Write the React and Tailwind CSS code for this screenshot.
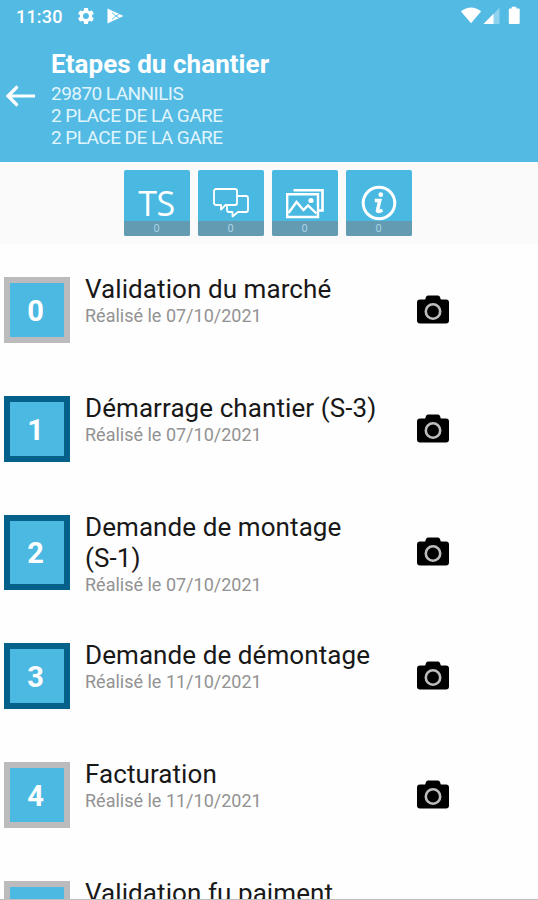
// App.jsx
import React from 'react';

const steps = [
  { title: 'Validation du marché', date: '07/10/2021', active: false },
  { title: 'Démarrage chantier', code: '(S-3)', date: '07/10/2021', active: true },
  { title: 'Demande de montage', code: '(S-1)', date: '07/10/2021', active: true },
  { title: 'Demande de démontage', date: '11/10/2021', active: true },
  { title: 'Facturation', date: '11/10/2021', active: false },
  { title: 'Validation fu paiment', date: '11/10/2021', active: false },
];

const GearIcon = () => (
  <svg className="w-[20px] h-[20px]" viewBox="0 0 24 24" fill="currentColor">
    <path d="M19.14 12.94c.04-.3.06-.61.06-.94 0-.32-.02-.64-.07-.94l2.03-1.58a.49.49 0 0 0 .12-.61l-1.92-3.32a.488.488 0 0 0-.59-.22l-2.39.96c-.5-.38-1.03-.7-1.62-.94l-.36-2.54a.484.484 0 0 0-.48-.41h-3.84c-.24 0-.43.17-.47.41l-.36 2.54c-.59.24-1.13.57-1.62.94l-2.39-.96c-.22-.08-.47 0-.59.22L2.74 8.87c-.12.21-.08.47.12.61l2.03 1.58c-.05.3-.09.63-.09.94s.02.64.07.94l-2.03 1.58a.49.49 0 0 0-.12.61l1.92 3.32c.12.22.37.29.59.22l2.39-.96c.5.38 1.03.7 1.62.94l.36 2.54c.05.24.24.41.48.41h3.84c.24 0 .44-.17.47-.41l.36-2.54c.59-.24 1.13-.56 1.62-.94l2.39.96c.22.08.47 0 .59-.22l1.92-3.32c.12-.22.07-.47-.12-.61l-2.01-1.58zM12 15.6A3.61 3.61 0 0 1 8.4 12c0-1.98 1.62-3.6 3.6-3.6s3.6 1.62 3.6 3.6-1.62 3.6-3.6 3.6z" />
  </svg>
);

const PlayIcon = () => (
  <svg className="w-[17px] h-[16px]" viewBox="0 0 17 16" fill="currentColor">
    <path d="M0.5 0.5 L16.5 8 L0.5 15.5 Z" />
    <path d="M5 4.5 L9 8 L5 11.5 M9 8 L12 6.3 M9 8 L12 9.7" fill="none" stroke="#53bae3" strokeWidth="0.9" />
  </svg>
);

const StatusIcons = () => (
  <svg className="w-[62px] h-[20px]" viewBox="0 0 62 20" fill="currentColor">
    <path d="M0.8 5.2 Q11 -2.4 21.2 5.2 L11 17.2 Z" />
    <path d="M39.5 1.8 V18 H23.5 Z" opacity="0.35" />
    <path d="M33.5 7.8 V18 H23.5 Z" />
    <path d="M51.7 0.8 h4.6 v1.8 h2.4 a1 1 0 0 1 1 1 v13.4 a1 1 0 0 1 -1 1 h-8.9 a1 1 0 0 1 -1 -1 v-13.4 a1 1 0 0 1 1 -1 h1.9 z" />
  </svg>
);

const BackIcon = () => (
  <svg className="w-[30px] h-[24px] mb-[5px]" viewBox="0 0 30 24" fill="none" stroke="currentColor" strokeWidth="3.2">
    <path d="M30 12 H3 M12.5 2.5 L3 12 L12.5 21.5" />
  </svg>
);

const ChatIcon = () => (
  <svg className="w-[38px] h-[32px]" viewBox="0 0 38 32" fill="none" stroke="currentColor" strokeWidth="1.8" strokeLinejoin="round">
    <path d="M4 2 H23 a2 2 0 0 1 2 2 V16 a2 2 0 0 1 -2 2 H13.5 L9 22.5 V18 H4 a2 2 0 0 1 -2 -2 V4 a2 2 0 0 1 2 -2 Z" />
    <path d="M25 9 H34 a2 2 0 0 1 2 2 V23 a2 2 0 0 1 -2 2 H26 L20.5 29.5 V25 H17 a2 2 0 0 1 -2 -2 V18" />
  </svg>
);

const PhotosIcon = () => (
  <svg className="w-[40px] h-[32px]" viewBox="0 0 40 32" fill="none" stroke="currentColor" strokeWidth="2.4">
    <path d="M2.2 7.2 H33 V30 H2.2 Z" />
    <path d="M8.5 3.2 H37.5 V23.5 H34" strokeWidth="2.6" />
    <path d="M3.5 26 L11.5 15 L18.5 23 L23 18.5 L31.5 26.5" />
    <circle cx="26" cy="13.5" r="2.6" fill="currentColor" stroke="none" />
  </svg>
);

const InfoIcon = () => (
  <svg className="w-[36px] h-[36px]" viewBox="0 0 36 36" fill="none" stroke="currentColor">
    <circle cx="18" cy="18" r="15.8" strokeWidth="3" />
    <circle cx="19.8" cy="9.7" r="2.4" fill="currentColor" stroke="none" />
    <path d="M13.8 15.5 H18.8 L16.4 25.8 Q16.4 27.4 21.5 25.3" strokeWidth="3.4" />
  </svg>
);

const CameraIcon = () => (
  <svg className="w-[32px] h-[29px]" viewBox="0 0 32 29">
    <path d="M11 0.5 H21 Q22.5 0.5 23 2 L23.8 4.5 H29 a3 3 0 0 1 3 3 V25.5 a3 3 0 0 1 -3 3 H3 a3 3 0 0 1 -3 -3 V7.5 a3 3 0 0 1 3 -3 H8.2 L9 2 Q9.5 0.5 11 0.5 Z" fill="#000" />
    <circle cx="16" cy="16.5" r="7.2" fill="none" stroke="#bdbdbd" strokeWidth="2.6" />
  </svg>
);

const Tile = ({ children }) => (
  <button className="w-[66px] h-[66px] rounded-[2px] overflow-hidden bg-[#49b9e2] text-white flex flex-col">
    <span className="h-[51px] w-full pt-[15px] flex items-center justify-center">{children}</span>
    <span className="h-[15px] w-full bg-[#639bb2] text-[#a9d3e5] text-[11px] leading-[16px] text-center">0</span>
  </button>
);

const Step = ({ number, title, code, date, active }) => (
  <div className="flex mb-[53px] shrink-0">
    <div className={`w-[66px] min-h-[66px] shrink-0 border-[6px] bg-[#4bb9e2] text-white text-[29px] font-bold flex items-center justify-center pt-[3px] pr-[3px] ${active ? 'border-[#06618a]' : 'border-[#bbbbbd]'}`}>
      {number}
    </div>
    <div className="w-[304px] ml-[15px] -mt-[3px] -mb-[6px] shrink-0">
      <p className="text-[26px] leading-[31px] tracking-[0.08px] text-[#181818]">
        {title} {code && <span className="whitespace-nowrap">{code}</span>}
      </p>
      <p className="text-[18px] leading-[22px] text-[#929292]">Réalisé le {date}</p>
    </div>
    <div className="ml-[28px] pb-[2px] flex items-center">
      <CameraIcon />
    </div>
  </div>
);

const App = () => (
  <div className="w-full h-[900px] overflow-hidden flex flex-col bg-[#fefefe] border-b border-[#bdbdbd] font-['Roboto',sans-serif]">
    <header className="h-[162px] shrink-0 bg-[#53bae3] text-white">
      <div className="h-8 flex items-center pl-[16px] pr-[16px]">
        <span className="text-[18px] font-medium tracking-[0.2px]">11:30</span>
        <span className="ml-[13px]"><GearIcon /></span>
        <span className="ml-[11px]"><PlayIcon /></span>
        <span className="ml-auto"><StatusIcons /></span>
      </div>
      <div className="flex items-center pl-[5px] pt-[16px]">
        <BackIcon />
        <div className="ml-[16px]">
          <h1 className="text-[26px] leading-[32px] mb-[3px] tracking-[0.05px] font-bold">Etapes du chantier</h1>
          <p className="text-[19px] leading-[22px] tracking-[-0.55px] text-[#e0f5fd]">29870 LANNILIS</p>
          <p className="text-[19px] leading-[22px] tracking-[-0.55px] text-[#e0f5fd]">2 PLACE DE LA GARE</p>
          <p className="text-[19px] leading-[22px] tracking-[-0.55px] text-[#e0f5fd]">2 PLACE DE LA GARE</p>
        </div>
      </div>
    </header>
    <nav className="h-[82px] shrink-0 bg-[#fafafa] flex justify-center gap-2 pt-2 pr-[3px]">
      <Tile><span className="font-['Open_Sans',sans-serif] text-[34px] leading-[32px] tracking-[-0.5px]">TS</span></Tile>
      <Tile><ChatIcon /></Tile>
      <Tile><PhotosIcon /></Tile>
      <Tile><InfoIcon /></Tile>
    </nav>
    <main className="flex flex-col pt-[33px] pl-1">
      {steps.map((step, index) => (
        <Step key={step.title} number={index} {...step} />
      ))}
    </main>
  </div>
);

export default App;
